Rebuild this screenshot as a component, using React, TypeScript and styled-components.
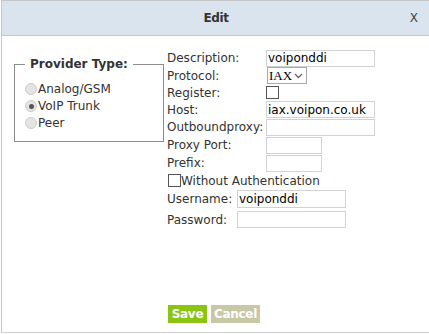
import React from "react";
import styled, { createGlobalStyle } from "styled-components";

const GlobalStyle = createGlobalStyle`
  html, body {
    margin: 0;
    padding: 0;
    background: #ffffff;
  }
  body {
    font-family: "DejaVu Sans", Verdana, sans-serif;
    font-size: 12px;
    color: #333333;
  }
`;

const Dialog = styled.div`
  margin-left: 1px;
  width: 428px;
  height: 331px;
  border-top: 1px solid #c6c6c6;
  border-left: 1px solid #c6c6c6;
  border-bottom: 1px solid #cfcfcf;
  display: flex;
  flex-direction: column;
  background: #fff;
`;

const Header = styled.div`
  height: 34px;
  flex: none;
  background: #d9e4ee;
  border-bottom: 1px solid #bfc9d3;
  display: flex;
  align-items: center;
  justify-content: center;
  position: relative;
`;

const Title = styled.span`
  font-weight: bold;
  font-size: 12px;
  letter-spacing: -0.4px;
  color: #333;
`;

const Close = styled.span`
  position: absolute;
  right: 12px;
  top: 10px;
  font-size: 12px;
  color: #444;
`;

const Body = styled.div`
  flex: 1;
  display: flex;
  flex-direction: column;
`;

const Main = styled.div`
  flex: 1;
  display: flex;
  align-items: flex-start;
`;

const ProviderSet = styled.fieldset`
  margin: 21px 0 0 12px;
  padding: 0 0 10px 10px;
  border: 1px solid #8c8c8c;
  box-sizing: border-box;
  width: 150px;
`;

const Legend = styled.legend`
  padding: 0 5px;
  font-weight: bold;
  font-size: 12px;
  line-height: 15px;
  color: #333;
`;

const RadioList = styled.div`
  padding-top: 9px;
  display: flex;
  flex-direction: column;
`;

const RadioRow = styled.label`
  display: flex;
  align-items: center;
  height: 16.7px;
  font-size: 12px;
  color: #333;
`;

const Radio = styled.input`
  appearance: none;
  margin: 0 1px 0 0;
  width: 12px;
  height: 12px;
  border-radius: 50%;
  border: 1px solid #cdcdcd;
  background: #e4e4e4;
  box-sizing: border-box;
  position: relative;
  &:checked::after {
    content: "";
    position: absolute;
    left: 2.5px;
    top: 2.5px;
    width: 5px;
    height: 5px;
    border-radius: 50%;
    background: #555;
  }
`;

const FormCol = styled.div`
  margin-left: 3px;
  padding-top: 13px;
  display: flex;
  flex-direction: column;
`;

const FieldGrid = styled.div<{ $label: number }>`
  display: grid;
  grid-template-columns: ${(p) => p.$label}px auto;
  align-items: center;
`;

const Label = styled.div<{ $h: number }>`
  height: ${(p) => p.$h}px;
  display: flex;
  align-items: center;
  white-space: nowrap;
`;

const Cell = styled.div<{ $h: number }>`
  height: ${(p) => p.$h}px;
  display: flex;
  align-items: center;
`;

const TextInput = styled.input<{ $w: number; $h?: number }>`
  width: ${(p) => p.$w}px;
  height: ${(p) => p.$h ?? 17}px;
  box-sizing: border-box;
  border: 1px solid #d2d2d2;
  padding: 0 1px;
  margin: 0;
  font-family: "DejaVu Sans", Verdana, sans-serif;
  font-size: 12px;
  color: #000;
  outline: none;
  background: #fff;
`;

const SelectWrap = styled.div`
  position: relative;
  width: 40px;
  height: 17px;
  margin-left: 1px;
`;

const Select = styled.select`
  appearance: none;
  width: 40px;
  height: 17px;
  box-sizing: border-box;
  border: 1px solid #a8a8a8;
  border-radius: 0;
  padding: 0 0 0 1px;
  margin: 0;
  font-family: "Liberation Serif", "Times New Roman", serif;
  font-size: 13px;
  line-height: 15px;
  color: #000;
  background: #fff;
  outline: none;
`;

const Chevron = styled.svg`
  position: absolute;
  right: 4px;
  top: 6px;
  pointer-events: none;
`;

const Check = styled.input`
  appearance: none;
  margin: 0;
  width: 13px;
  height: 13px;
  box-sizing: border-box;
  border: 1px solid #555;
  background: #fff;
`;

const CheckRow = styled.label`
  height: 17px;
  display: flex;
  align-items: center;
  margin-left: 1px;
  white-space: nowrap;
`;

const Footer = styled.div`
  display: flex;
  gap: 4px;
  padding: 0 0 9px 166px;
`;

const Button = styled.button<{ $bg: string; $w: number }>`
  width: ${(p) => p.$w}px;
  height: 18px;
  padding: 0;
  border: none;
  background: ${(p) => p.$bg};
  color: #fff;
  font-family: "DejaVu Sans", Verdana, sans-serif;
  font-weight: bold;
  font-size: 12px;
  letter-spacing: -0.3px;
`;

const rows: { label: string; h: number; field: React.ReactNode }[] = [
  { label: "Description:", h: 18, field: <TextInput $w={109} defaultValue="voiponddi" /> },
  {
    label: "Protocol:",
    h: 17,
    field: (
      <SelectWrap>
        <Select defaultValue="IAX">
          <option>IAX</option>
          <option>SIP</option>
        </Select>
        <Chevron width="9" height="6" viewBox="0 0 9 6">
          <path d="M1 1l3.5 3.5L8 1" fill="none" stroke="#666" strokeWidth="1.3" />
        </Chevron>
      </SelectWrap>
    ),
  },
  { label: "Register:", h: 17, field: <Check type="checkbox" /> },
  { label: "Host:", h: 17, field: <TextInput $w={109} defaultValue="iax.voipon.co.uk" /> },
  { label: "Outboundproxy:", h: 18, field: <TextInput $w={109} /> },
  { label: "Proxy Port:", h: 18, field: <TextInput $w={56} /> },
  { label: "Prefix:", h: 18, field: <TextInput $w={56} /> },
];

export default function App() {
  return (
    <>
      <GlobalStyle />
      <Dialog>
        <Header>
          <Title>Edit</Title>
          <Close>X</Close>
        </Header>
        <Body>
          <Main>
            <ProviderSet>
              <Legend>Provider Type:</Legend>
              <RadioList>
                <RadioRow>
                  <Radio type="radio" name="ptype" />
                  Analog/GSM
                </RadioRow>
                <RadioRow>
                  <Radio type="radio" name="ptype" defaultChecked />
                  VoIP Trunk
                </RadioRow>
                <RadioRow>
                  <Radio type="radio" name="ptype" />
                  Peer
                </RadioRow>
              </RadioList>
            </ProviderSet>
            <FormCol>
              <FieldGrid $label={99}>
                {rows.map((r) => (
                  <React.Fragment key={r.label}>
                    <Label $h={r.h}>{r.label}</Label>
                    <Cell $h={r.h}>{r.field}</Cell>
                  </React.Fragment>
                ))}
              </FieldGrid>
              <CheckRow>
                <Check type="checkbox" />
                Without Authentication
              </CheckRow>
              <FieldGrid $label={70}>
                <Label $h={20}>Username:</Label>
                <Cell $h={20}>
                  <TextInput $w={109} $h={18} defaultValue="voiponddi" />
                </Cell>
                <Label $h={21}>Password:</Label>
                <Cell $h={21}>
                  <TextInput $w={109} type="password" />
                </Cell>
              </FieldGrid>
            </FormCol>
          </Main>
          <Footer>
            <Button $bg="#8cc412" $w={39}>Save</Button>
            <Button $bg="#c8c7a6" $w={49}>Cancel</Button>
          </Footer>
        </Body>
      </Dialog>
    </>
  );
}
